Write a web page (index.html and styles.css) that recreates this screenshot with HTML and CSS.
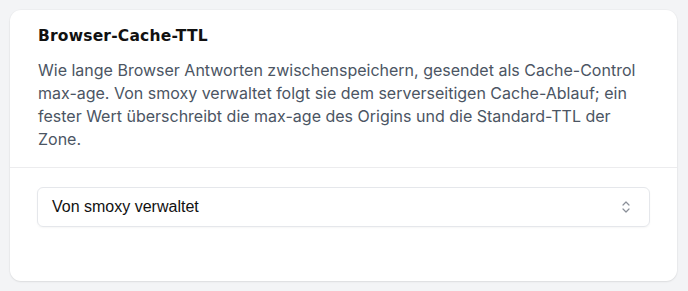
FILE: index.html
```html
<!DOCTYPE html>
<html lang="de">
<head>
<meta charset="utf-8">
<title>Browser-Cache-TTL</title>
<link rel="stylesheet" href="styles.css">
</head>
<body>
<section class="card">
  <header class="card-head">
    <h2 class="title">Browser-Cache-TTL</h2>
    <p class="desc">Wie lange Browser Antworten zwischenspeichern, gesendet als Cache-Control max-age. Von smoxy verwaltet folgt sie dem serverseitigen Cache-Ablauf; ein fester Wert überschreibt die max-age des Origins und die Standard-TTL der Zone.</p>
  </header>
  <div class="card-body">
    <div class="select">
      <span class="select-value">Von smoxy verwaltet</span>
      <svg class="chev" width="10" height="14" viewBox="0 0 10 14" aria-hidden="true">
        <path d="M2 5 L5 2 L8 5" fill="none" stroke="#8a8f98" stroke-width="1.2" stroke-linecap="round" stroke-linejoin="round"/>
        <path d="M2 9 L5 12 L8 9" fill="none" stroke="#8a8f98" stroke-width="1.2" stroke-linecap="round" stroke-linejoin="round"/>
      </svg>
    </div>
  </div>
</section>
</body>
</html>
```

FILE: styles.css
```css
html, body {
  margin: 0;
  padding: 0;
}
body {
  background: #f3f4f6;
  padding: 10px 11px 10px 10px;
  font-family: Inter, "Noto Sans", sans-serif;
}
.card {
  background: #ffffff;
  border-radius: 11px;
  box-shadow: 0 1px 2px rgba(0, 0, 0, 0.08), 0 0 0 1px rgba(0, 0, 0, 0.02);
  height: 271px;
  box-sizing: border-box;
}
.card-head {
  padding: 15px 28px 16px 28px;
  border-bottom: 1px solid #ececee;
}
.title {
  margin: 0;
  font-family: "DejaVu Sans", Inter, sans-serif;
  font-weight: 700;
  font-size: 15.5px;
  line-height: 22px;
  letter-spacing: 0.2px;
  color: #111111;
}
.desc {
  margin: 12px 0 0 0;
  font-size: 16px;
  line-height: 23px;
  color: #4b5563;
}
.card-body {
  padding: 19px 27px 0 27px;
}
.select {
  display: flex;
  align-items: center;
  justify-content: space-between;
  height: 40px;
  box-sizing: border-box;
  border: 1px solid #e5e7eb;
  border-radius: 6px;
  padding: 0 18px 0 14px;
  box-shadow: 0 1px 2px rgba(0, 0, 0, 0.04);
}
.select-value {
  font-family: "Liberation Sans", Arial, sans-serif;
  font-size: 16px;
  color: #111111;
}
.chev {
  display: block;
}
```
